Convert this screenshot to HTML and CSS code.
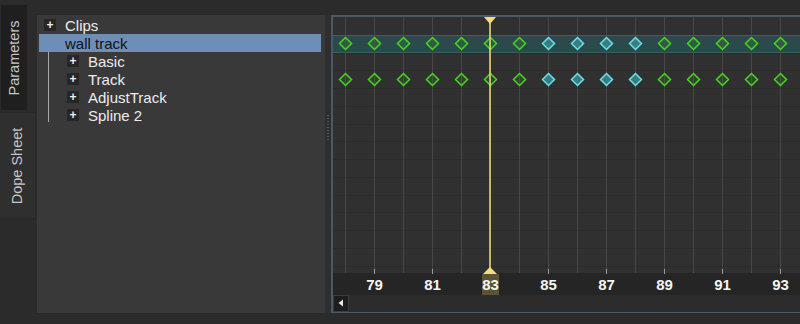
FILE: index.html
```html
<!DOCTYPE html>
<html>
    <head>
        <title>Dope Sheet</title>
        <link rel="stylesheet" href="styles.css">
    </head>
    <body>
        <div class="tabs">
            <div class="tab active"><span>Parameters</span></div>
            <div class="tab"><span>Dope Sheet</span></div>
        </div>
        <div class="tree">
            <div class="row"><span class="plus">+</span><span class="label">Clips</span></div>
            <div class="row selected"><span class="label">wall track</span></div>
            <div class="children">
                <div class="row"><span class="plus">+</span><span class="label">Basic</span></div>
                <div class="row"><span class="plus">+</span><span class="label">Track</span></div>
                <div class="row"><span class="plus">+</span><span class="label">AdjustTrack</span></div>
                <div class="row"><span class="plus">+</span><span class="label">Spline 2</span></div>
            </div>
        </div>
        <div class="splitter"><div class="grip"></div></div>
        <div class="timeline">
            <svg class="sheet" width="467" height="295" viewBox="333 17 467 295">
                <rect x="333" y="17" width="467" height="256" fill="#303030"/>
                <rect x="333" y="35" width="467" height="18" fill="#2a4a4b"/>
                <g id="hlines" stroke="#2a2a2a" stroke-width="1"></g>
                <line x1="333" y1="35.5" x2="800" y2="35.5" stroke="#376162"/>
                <line x1="333" y1="52.5" x2="800" y2="52.5" stroke="#376162"/>
                <g id="vlines" stroke="#474747" stroke-width="1"></g>
                <rect x="333" y="273" width="467" height="22" fill="#252525"/>
                <rect x="333" y="295" width="467" height="17" fill="#2c2c2c"/>
                <rect x="482" y="274" width="17" height="21" fill="#5a5434"/>
                <g id="ticks" stroke="#9a9a9a" stroke-width="1"></g>
                <g id="keys" stroke-width="1.5"></g>
                <line x1="490" y1="17" x2="490" y2="273" stroke="#f1de7a" stroke-width="1.5"/>
                <polygon points="484,17 496,17 490,24" fill="#f1de7a"/>
                <polygon points="483,274 497,274 490,267" fill="#f1de7a"/>
                <g id="labels" class="frame"></g>
                <rect x="333.5" y="295.5" width="15" height="16" fill="#1d1d1d" stroke="#3c3c3c"/>
                <polygon points="343,299.5 343,306.5 338.5,303" fill="#e8e8e8"/>
            </svg>
        </div>
        <script>
            var ns = "http://www.w3.org/2000/svg";
            function add(group, tag, attrs, text){
                var el = document.createElementNS(ns, tag);
                for(var k in attrs){ el.setAttribute(k, attrs[k]); }
                if(text){ el.textContent = text; }
                document.getElementById(group).appendChild(el);
            }
            // row separators
            var rows = [35,53,70,88,106,124,141,159,177,195,212,230,248,266];
            rows.forEach(y => add("hlines", "line", {x1:333, y1:y+0.5, x2:800, y2:y+0.5}));
            // one column per frame, frame 78 at x=345
            for(var f = 78; f <= 93; f++){
                var x = 345 + (f - 78) * 29 + 0.5;
                add("vlines", "line", {x1:x, y1:17, x2:x, y2:273});
                if(f % 2 === 1){
                    add("ticks", "line", {x1:x, y1:269, x2:x, y2:274});
                    add("labels", "text", {x:x, y:290}, String(f));
                }
                var cyan = f >= 85 && f <= 88;
                [43.5, 79.5].forEach(y => {
                    var cx = x, d = 6;
                    add("keys", "polygon", {
                        points: `${cx},${y-d} ${cx+d},${y} ${cx},${y+d} ${cx-d},${y}`,
                        fill: cyan ? "#3a7c80" : "rgba(70,200,30,0.12)",
                        stroke: cyan ? "#63e3ea" : "#45d61e"
                    });
                });
            }
        </script>
    </body>
</html>
```

FILE: styles.css
```css
body{
    margin: 0;
    width: 800px;
    height: 324px;
    background-color: #2b2b2b;
    display: flex;
    overflow: hidden;
    font-family: "Liberation Sans", Arial, sans-serif;
}
.tabs{
    width: 37px;
    padding-top: 5px;
    display: flex;
    flex-direction: column;
    gap: 2px;
}
.tab{
    width: 35px;
    height: 105px;
    background-color: #2f2f2f;
    border: 1px solid #282828;
    border-left: 0;
    display: flex;
    align-items: center;
    justify-content: center;
}
.tab.active{
    width: 26px;
    height: 105px;
    background-color: #1f1f1f;
    border: 0;
    margin-left: 1px;
}
.tab span{
    transform: rotate(-90deg);
    white-space: nowrap;
    color: #c6c6c6;
    font-size: 14.5px;
}
.tree{
    width: 288px;
    height: 298px;
    margin-top: 15px;
    background-color: #393939;
    padding-top: 1px;
    box-sizing: border-box;
}
.row{
    height: 18px;
    display: flex;
    align-items: center;
    padding-left: 7px;
    color: #ececec;
    font-size: 15px;
}
.row.selected{
    background-color: #6b8fb9;
    color: #111;
    margin: 0 4px 0 2px;
    padding-left: 26px;
}
.plus{
    width: 12px;
    height: 12px;
    background-color: #262626;
    color: #f0f0f0;
    font-size: 12px;
    font-weight: bold;
    line-height: 12px;
    text-align: center;
    margin-right: 9px;
}
.children{
    margin-left: 11px;
    border-left: 1px solid #a8a8a8;
    padding-left: 18px;
    margin-top: 0;
    height: 70px;
}
.children .row{
    padding-left: 0;
}
.splitter{
    width: 6px;
    margin-top: 15px;
    height: 298px;
    background-color: #2e2e2e;
    display: flex;
    justify-content: center;
    padding-top: 100px;
    box-sizing: border-box;
}
.grip{
    width: 2px;
    height: 26px;
    background-image: repeating-linear-gradient(#555 0 1px, transparent 1px 3px);
}
.timeline{
    flex: 1;
    margin-top: 15px;
    height: 298px;
    border-top: 2px solid #4a5869;
    border-left: 2px solid #4a5869;
    border-bottom: 1px solid #4a5869;
    box-sizing: border-box;
}
.sheet{
    display: block;
}
.frame text{
    fill: #f4f4f4;
    font-family: "Liberation Sans", Arial, sans-serif;
    font-size: 15px;
    font-weight: bold;
    text-anchor: middle;
}
```
